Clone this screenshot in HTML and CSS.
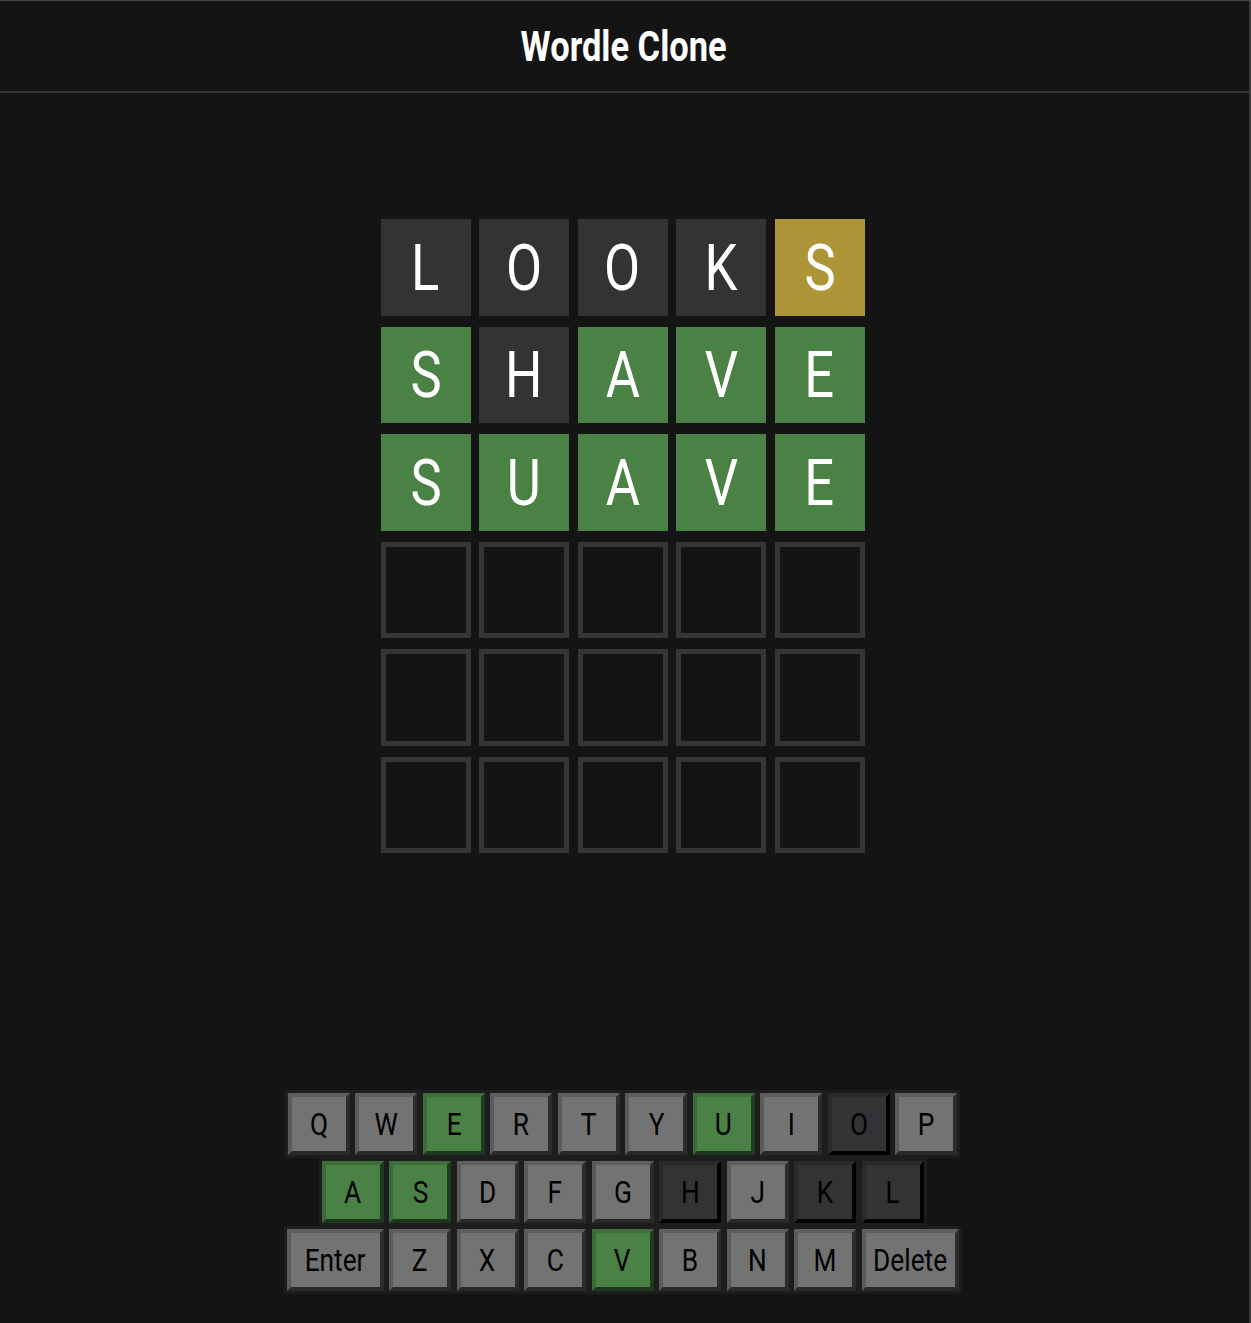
FILE: index.html
```html
<!DOCTYPE html>
<html lang="en">
<head>
<meta charset="utf-8">
<title>Wordle Clone</title>
<link rel="stylesheet" href="styles.css">
</head>
<body>
<div class="app">
  <header class="header">
    <h1 class="title"><span class="cond">Wordle Clone</span></h1>
  </header>
  <main class="main">
    <div class="board">
      <div class="tile absent"><span class="cond">L</span></div>
      <div class="tile absent"><span class="cond">O</span></div>
      <div class="tile absent"><span class="cond">O</span></div>
      <div class="tile absent"><span class="cond">K</span></div>
      <div class="tile present"><span class="cond">S</span></div>

      <div class="tile correct"><span class="cond">S</span></div>
      <div class="tile absent"><span class="cond">H</span></div>
      <div class="tile correct"><span class="cond">A</span></div>
      <div class="tile correct"><span class="cond">V</span></div>
      <div class="tile correct"><span class="cond">E</span></div>

      <div class="tile correct"><span class="cond">S</span></div>
      <div class="tile correct"><span class="cond">U</span></div>
      <div class="tile correct"><span class="cond">A</span></div>
      <div class="tile correct"><span class="cond">V</span></div>
      <div class="tile correct"><span class="cond">E</span></div>

      <div class="tile empty"></div><div class="tile empty"></div><div class="tile empty"></div><div class="tile empty"></div><div class="tile empty"></div>
      <div class="tile empty"></div><div class="tile empty"></div><div class="tile empty"></div><div class="tile empty"></div><div class="tile empty"></div>
      <div class="tile empty"></div><div class="tile empty"></div><div class="tile empty"></div><div class="tile empty"></div><div class="tile empty"></div>
    </div>

    <div class="keyboard">
      <div class="krow">
        <button class="key"><span class="cond">Q</span></button>
        <button class="key"><span class="cond">W</span></button>
        <button class="key k-correct"><span class="cond">E</span></button>
        <button class="key"><span class="cond">R</span></button>
        <button class="key"><span class="cond">T</span></button>
        <button class="key"><span class="cond">Y</span></button>
        <button class="key k-correct"><span class="cond">U</span></button>
        <button class="key"><span class="cond">I</span></button>
        <button class="key k-absent"><span class="cond">O</span></button>
        <button class="key"><span class="cond">P</span></button>
      </div>
      <div class="krow">
        <button class="key k-correct"><span class="cond">A</span></button>
        <button class="key k-correct"><span class="cond">S</span></button>
        <button class="key"><span class="cond">D</span></button>
        <button class="key"><span class="cond">F</span></button>
        <button class="key"><span class="cond">G</span></button>
        <button class="key k-absent"><span class="cond">H</span></button>
        <button class="key"><span class="cond">J</span></button>
        <button class="key k-absent"><span class="cond">K</span></button>
        <button class="key k-absent"><span class="cond">L</span></button>
      </div>
      <div class="krow">
        <button class="key wide"><span class="cond">Enter</span></button>
        <button class="key"><span class="cond">Z</span></button>
        <button class="key"><span class="cond">X</span></button>
        <button class="key"><span class="cond">C</span></button>
        <button class="key k-correct"><span class="cond">V</span></button>
        <button class="key"><span class="cond">B</span></button>
        <button class="key"><span class="cond">N</span></button>
        <button class="key"><span class="cond">M</span></button>
        <button class="key wide"><span class="cond">Delete</span></button>
      </div>
    </div>
  </main>
</div>
</body>
</html>
```

FILE: styles.css
```css
* { box-sizing: border-box; }

html, body {
  margin: 0;
  padding: 0;
  background: #141414;
  font-family: Roboto, "Liberation Sans", sans-serif;
}

.app {
  min-height: 100vh;
  border-top: 1px solid #444446;
  border-right: 2px solid #3a3a3c;
}

.cond {
  display: inline-block;
  transform: scaleX(0.82);
}

.header {
  height: 92px;
  border-bottom: 2px solid #333335;
  display: flex;
  align-items: center;
  justify-content: center;
  padding-right: 2px;
}

.title {
  margin: 0;
  color: #ffffff;
  font-size: 42px;
  font-weight: 700;
  line-height: 1;
  padding-top: 2px;
}

.main {
  display: flex;
  flex-direction: column;
  align-items: center;
  padding-right: 4px;
}

.board {
  margin-top: 126px;
  display: grid;
  grid-template-columns: repeat(5, 90px);
  grid-auto-rows: 96.5px;
  column-gap: 8.5px;
  row-gap: 11px;
}

.tile {
  display: flex;
  align-items: center;
  justify-content: center;
  color: #ffffff;
  font-size: 64px;
  font-weight: 400;
  line-height: 1;
  padding-top: 3px;
}

.tile.absent { background: #333335; }
.tile.present { background: #ad9537; }
.tile.correct { background: #4a8246; }
.tile.empty { border: 5px solid #363636; background: transparent; }

.keyboard {
  margin-top: 240px;
  display: flex;
  flex-direction: column;
  gap: 6px;
}

.krow {
  display: flex;
  justify-content: center;
  gap: 5.5px;
}

.key {
  width: 62px;
  height: 62px;
  padding: 0;
  margin: 0;
  display: flex;
  align-items: center;
  justify-content: center;
  font-family: Roboto, "Liberation Sans", sans-serif;
  font-size: 32px;
  font-weight: 400;
  color: #000000;
  background: #737373;
  border: 4px solid;
  border-color: #5e5e5e #2c2c2c #292929 #5b5b5b;
  box-shadow: 0 0 0 3px #1d1d1d;
  line-height: 1;
}

.key.wide { width: 97px; }

.key.k-correct {
  background: #4a8246;
  border-color: #3e6e3b #203a1f #1f361e #3c6a39;
}

.key.k-absent {
  background: #333335;
  border-color: #2a2a2b #000000 #000000 #2a2a2b;
}
```
